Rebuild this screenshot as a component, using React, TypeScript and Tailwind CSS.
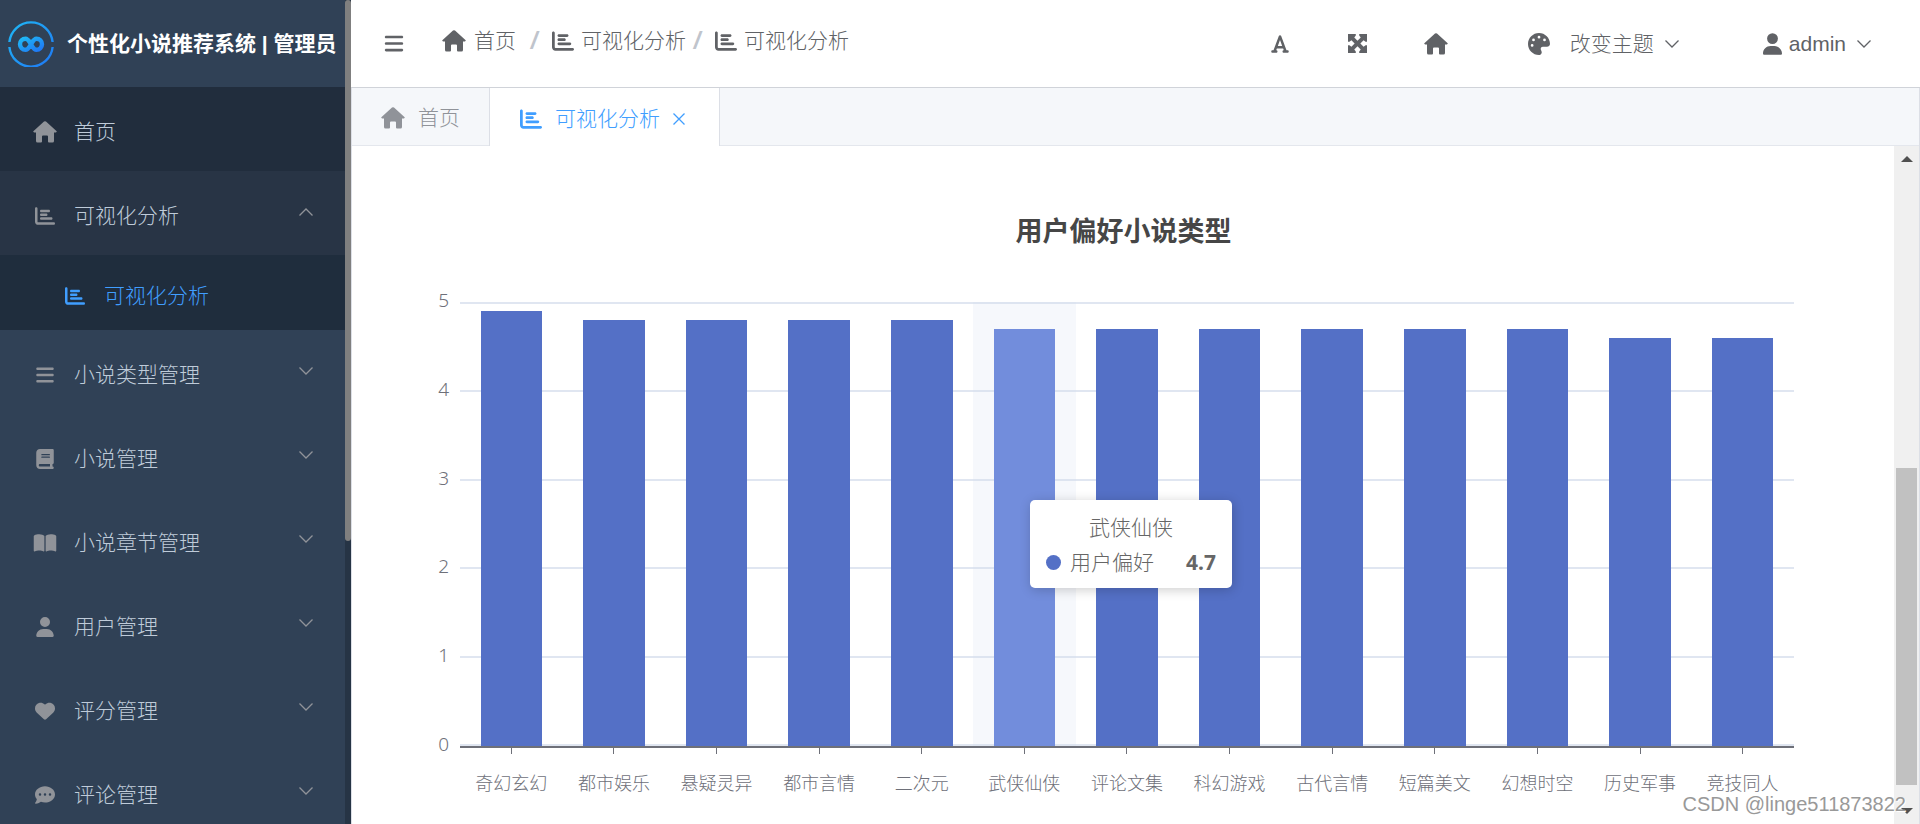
import {
  FaBars,
  FaBook,
  FaBookOpen,
  FaChartBar,
  FaCommentDots,
  FaFont,
  FaHeart,
  FaPalette,
  FaUser,
} from "react-icons/fa6";
import type { IconType } from "react-icons";

const MENU: { icon: IconType; label: string }[] = [
  { icon: FaBars, label: "小说类型管理" },
  { icon: FaBook, label: "小说管理" },
  { icon: FaBookOpen, label: "小说章节管理" },
  { icon: FaUser, label: "用户管理" },
  { icon: FaHeart, label: "评分管理" },
  { icon: FaCommentDots, label: "评论管理" },
];

const DATA = [
  { name: "奇幻玄幻", value: 4.9 },
  { name: "都市娱乐", value: 4.8 },
  { name: "悬疑灵异", value: 4.8 },
  { name: "都市言情", value: 4.8 },
  { name: "二次元", value: 4.8 },
  { name: "武侠仙侠", value: 4.7 },
  { name: "评论文集", value: 4.7 },
  { name: "科幻游戏", value: 4.7 },
  { name: "古代言情", value: 4.7 },
  { name: "短篇美文", value: 4.7 },
  { name: "幻想时空", value: 4.7 },
  { name: "历史军事", value: 4.6 },
  { name: "竞技同人", value: 4.6 },
];

const MAX = 5;
const ACTIVE = 5;

function Chevron({ up = false, className = "" }: { up?: boolean; className?: string }) {
  return (
    <svg viewBox="0 0 16 10" className={`h-[10px] w-4 shrink-0 ${className}`} fill="none" stroke="currentColor" strokeWidth="1.3">
      <path d={up ? "M1.5 8.5 8 2l6.5 6.5" : "M1.5 1.5 8 8l6.5-6.5"} />
    </svg>
  );
}

function House({ className = "" }: { className?: string }) {
  return (
    <svg viewBox="0 0 24 22" className={`h-[22px] w-6 shrink-0 ${className}`} fill="currentColor">
      <path d="M11 .6a1.5 1.5 0 0 1 2 0l10.400 9.300c.7.6.3 1.600-.6 1.600H21V20a1.500 1.500 0 0 1-1.500 1.500H16a1 1 0 0 1-1-1v-5a1 1 0 0 0-1-1h-4a1 1 0 0 0-1 1v5a1 1 0 0 1-1 1H4.500A1.500 1.500 0 0 1 3 20v-8.500H1.200c-.9 0-1.300-1-.6-1.600z" />
    </svg>
  );
}

function Expand() {
  return (
    <svg viewBox="0 0 20 20" className="size-[19px]" fill="currentColor">
      <path d="M0 0h8.200v1.500L6.600 3.600 10 7l3.400-3.400-1.600-2.100V0H20v8.200h-1.500l-2.100-1.600L13 10l3.400 3.400 2.100-1.600H20V20h-8.200v-1.500l1.600-2.100L10 13l-3.400 3.400 1.600 2.100V20H0v-8.200h1.500l2.100 1.600L7 10 3.600 6.600 1.500 8.200H0z" />
    </svg>
  );
}

function Logo() {
  return (
    <svg viewBox="0 0 46 46" className="size-[46px] shrink-0" fill="none">
      <defs>
        <linearGradient id="logo" x1="0" y1="0" x2="1" y2="1">
          <stop stopColor="#1fb8f5" />
          <stop offset="1" stopColor="#1f78f5" />
        </linearGradient>
      </defs>
      <path d="M1.400 21a21.700 21.700 0 0 1 43.200 0M1.400 26a21.700 21.700 0 0 0 43.200 0" stroke="url(#logo)" strokeWidth="2.4" />
      <path
        d="M23 23.300c-1.700-2.800-2.900-5.500-5.500-5.500a5.500 5.500 0 0 0 0 11c2.600 0 3.800-2.700 5.500-5.500s2.900-5.500 5.500-5.500a5.500 5.500 0 0 1 0 11c-2.600 0-3.800-2.700-5.500-5.500z"
        stroke="url(#logo)"
        strokeWidth="4.4"
      />
    </svg>
  );
}

function Sidebar() {
  return (
    <aside className="flex w-[351px] shrink-0 overflow-hidden bg-[#304156]">
      <div className="min-w-0 flex-1">
        <div className="flex h-[87px] items-center gap-[13px] pl-2 text-[21px] font-bold whitespace-nowrap text-white">
          <Logo />
          <h1>个性化小说推荐系统 | 管理员</h1>
        </div>
        <nav className="text-[21px] text-[#bfcbd9]">
          <a href="#home" className="flex h-[84px] items-center gap-[17px] bg-[#212d3d] pt-[6px] pr-[31px] pl-[33px]">
            <House className="text-[#909399]" />
            首页
          </a>
          <button type="button" className="flex h-[84px] w-full items-center gap-[17px] bg-[#283445] pt-[6px] pr-[31px] pl-[33px]">
            <FaChartBar className="h-5 w-6 text-[#909399]" />
            可视化分析
            <Chevron up className="mb-2 ml-auto text-[#909399]" />
          </button>
          <a href="#analysis" className="flex h-[75px] items-center gap-[17px] bg-[#1f2d3d] pt-[6px] pl-[63px] text-[#409eff]">
            <FaChartBar className="h-5 w-6" />
            可视化分析
          </a>
          {MENU.map(({ icon: Icon, label }) => (
            <button key={label} type="button" className="flex h-[84px] w-full items-center gap-[17px] pt-[6px] pr-[31px] pl-[33px]">
              <Icon className="h-5 w-6 text-[#909399]" />
              {label}
              <Chevron className="mb-2 ml-auto text-[#909399]" />
            </button>
          ))}
        </nav>
      </div>
      <div className="h-screen w-[6px] bg-[#263445]">
        <div className="h-[541px] rounded bg-[#7f7f7f]" />
      </div>
    </aside>
  );
}

function Header() {
  return (
    <header className="flex h-[88px] shrink-0 items-center border-b border-[#d0d3d9] pr-12 pl-[33px] text-[21px] text-[#606266]">
      <button type="button" aria-label="菜单" className="mr-[38px]">
        <FaBars className="h-[21px] w-5" />
      </button>
      <nav className="flex items-center gap-[13px] pb-[6px]">
        <a href="#home" className="flex items-center gap-2">
          <House />
          首页
        </a>
        <span className="w-[10px] text-center text-2xl font-bold text-[#c0c4cc] italic">/</span>
        <a href="#analysis" className="flex items-center gap-[7px]">
          <FaChartBar className="size-[22px]" />
          可视化分析
        </a>
        <span className="-ml-[7px] w-[10px] text-center text-2xl font-bold text-[#c0c4cc] italic">/</span>
        <a href="#analysis" className="flex items-center gap-[7px]">
          <FaChartBar className="size-[22px]" />
          可视化分析
        </a>
      </nav>
      <div className="ml-auto flex items-center">
        <button type="button" aria-label="字体" className="mr-[58px]">
          <FaFont className="size-5" />
        </button>
        <button type="button" aria-label="全屏" className="mr-[57px]">
          <Expand />
        </button>
        <button type="button" aria-label="主页" className="mr-20">
          <House />
        </button>
        <button type="button" className="mr-[83px] flex items-center">
          <FaPalette className="mr-5 size-[22px]" />
          改变主题
          <Chevron className="ml-[10px]" />
        </button>
        <button type="button" className="flex items-center">
          <FaUser className="mr-[7px] h-[22px] w-[19px]" />
          admin
          <Chevron className="ml-[10px]" />
        </button>
      </div>
    </header>
  );
}

function Tabs() {
  return (
    <div className="flex h-[58px] shrink-0 border-b border-[#e4e7ed] bg-[#f5f7fa] text-[21px]">
      <button type="button" className="flex items-center gap-[13px] px-[29px] pt-[3px] text-[#909399]">
        <House />
        首页
      </button>
      <button type="button" className="-mb-px flex items-center border-x border-[#dcdfe6] bg-white pt-[3px] pr-[33px] pl-[30px] text-[#409eff]">
        <FaChartBar className="mr-[13px] size-[22px]" />
        可视化分析
        <svg viewBox="0 0 14 14" className="ml-3 size-[14px]" stroke="currentColor" strokeWidth="1.3">
          <path d="M1.5 1.5l11 11M12.5 1.5l-11 11" />
        </svg>
      </button>
    </div>
  );
}

function Tooltip() {
  return (
    <div className="absolute top-[198px] left-[570px] z-10 w-[202px] rounded-[5px] bg-white px-4 pt-[10px] pb-2 text-[21px] leading-[35px] text-[#666] shadow-[1px_2px_12px_rgba(0,0,0,0.2)]">
      <div className="text-center">武侠仙侠</div>
      <div className="flex items-center">
        <span className="mr-[9px] size-[15px] rounded-full bg-[#5470c6]" />
        用户偏好
        <span className="ml-auto font-['Noto_Sans',sans-serif] font-bold">4.7</span>
      </div>
    </div>
  );
}

function Chart() {
  return (
    <section className="min-w-0 flex-1 pt-[66px] pr-[100px] pl-[83px]">
      <h2 className="pl-[18px] text-center text-[27px] leading-10 font-bold text-[#464646]">用户偏好小说类型</h2>
      <div className="mt-[50px] flex gap-[11px]">
        <div className="-mt-[2px] flex h-[444px] w-[14px] flex-col justify-between text-right font-['Noto_Sans',sans-serif] text-[19px] leading-[0px] text-[#6e7079]">
          {[5, 4, 3, 2, 1, 0].map((n) => (
            <span key={n}>{n}</span>
          ))}
        </div>
        <div className="relative min-w-0 flex-1">
          <div className="absolute inset-x-0 top-0 flex h-[444px] flex-col justify-between">
            {[5, 4, 3, 2, 1, 0].map((n) => (
              <div key={n} className="h-0 border-t-2 border-[#e0e6f1]" />
            ))}
          </div>
          <div className="relative flex h-[446px] border-b-2 border-[#6e7079]">
            {DATA.map((d, i) => (
              <div
                key={d.name}
                className={`flex flex-1 items-end justify-center ${i === ACTIVE ? "bg-[#d2dbee]/20" : ""}`}
              >
                <div
                  className={`w-3/5 ${i === ACTIVE ? "bg-[#728ddc]" : "bg-[#5470c6]"}`}
                  style={{ height: `${(d.value / MAX) * 100}%` }}
                />
              </div>
            ))}
          </div>
          <div className="flex text-[18px] leading-6 text-[#6e7079]">
            {DATA.map((d) => (
              <div key={d.name} className="flex flex-1 flex-col items-center whitespace-nowrap">
                <span className="mb-[18px] h-[6px] w-px bg-[#6e7079]" />
                {d.name}
              </div>
            ))}
          </div>
          <Tooltip />
        </div>
      </div>
    </section>
  );
}

function Scrollbar() {
  return (
    <div className="flex w-[25px] shrink-0 flex-col items-center bg-[#f0f0f0] py-[10px]">
      <svg viewBox="0 0 12 6" className="h-[6px] w-3 fill-[#505050]">
        <path d="M0 6 6 0l6 6z" />
      </svg>
      <div className="mt-[306px] mb-[23px] w-[21px] flex-1 bg-[#c1c1c1]" />
      <svg viewBox="0 0 12 6" className="h-[6px] w-3 fill-[#505050]">
        <path d="M0 0h12L6 6z" />
      </svg>
    </div>
  );
}

export default function App() {
  return (
    <div className="relative flex h-screen overflow-hidden bg-white font-['Liberation_Sans','Noto_Sans_CJK_SC',sans-serif] font-light">
      <Sidebar />
      <div className="flex min-w-0 flex-1 flex-col">
        <Header />
        <main className="flex min-h-0 flex-1 flex-col border-x border-[#dcdfe6]">
          <Tabs />
          <div className="flex min-h-0 flex-1">
            <Chart />
            <Scrollbar />
          </div>
        </main>
      </div>
      <div className="absolute right-[14px] bottom-[5px] z-20 text-[20px] text-[#999] [text-shadow:1px_1px_0_#fff]">
        CSDN @linge511873822
      </div>
    </div>
  );
}
